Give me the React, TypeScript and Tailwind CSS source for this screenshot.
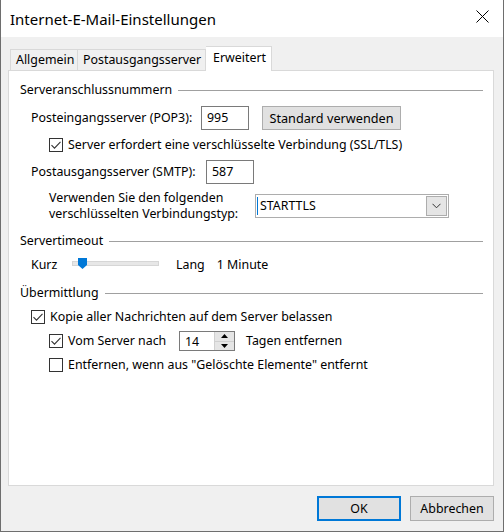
import React from "react";

function Check({ checked }: { checked: boolean }) {
  return (
    <div className="w-[14px] h-[14px] border border-[#333333] bg-white flex items-center justify-center shrink-0">
      {checked && (
        <svg width="12" height="12" viewBox="0 0 12 12">
          <path d="M1.5 6.2 L4.5 9.2 L10.5 2.8" fill="none" stroke="#333333" strokeWidth="1.1" />
        </svg>
      )}
    </div>
  );
}

function GroupHeader({ label }: { label: string }) {
  return (
    <div className="flex items-center h-[16px]">
      <span className="whitespace-nowrap">{label}</span>
      <div className="flex-1 h-px bg-[#a0a0a0] ml-[6px] mr-[2px]" />
    </div>
  );
}

export default function App() {
  return (
    <div className="w-[504px] h-[532px] bg-[#f0f0f0] border-l border-r border-b border-[#6e6e6e] flex flex-col text-[12.4px] text-black font-['Noto_Sans',sans-serif] leading-[16px]">
      {/* Title bar */}
      <div className="h-[37px] bg-white flex items-center justify-between pl-[9px] pr-[14px] shrink-0">
        <span className="text-[15px] leading-[20px] text-black mt-[1px]">Internet-E-Mail-Einstellungen</span>
        <svg width="13" height="13" viewBox="0 0 13 13" className="mt-[-4px]">
          <path d="M0.5 0.5 L12.5 12.5 M12.5 0.5 L0.5 12.5" stroke="#000" strokeWidth="1" />
        </svg>
      </div>

      {/* Tabs */}
      <div className="ml-[9px] mt-[9px] flex items-end h-[24px] relative z-10">
        <div className="h-[21px] border border-b-0 border-[#d9d9d9] bg-[#f0f0f0] px-[5px] flex items-center w-[68px]">Allgemein</div>
        <div className="h-[21px] border border-b-0 border-l-0 border-[#d9d9d9] bg-[#f0f0f0] px-[5px] flex items-center w-[128px]">Postausgangsserver</div>
        <div className="h-[25px] -mb-px border border-b-0 border-l-0 border-[#d9d9d9] bg-white px-[7px] flex items-center pb-[3px] w-[66px]">Erweitert</div>
      </div>

      {/* Panel */}
      <div className="ml-[7px] w-[486px] h-[416px] border border-[#d9d9d9] bg-white pl-[11px] pr-[8px] pt-[11px] flex flex-col shrink-0">
        <GroupHeader label="Serveranschlussnummern" />

        <div className="mt-[7px] flex items-center h-[25px] ml-[11px]">
          <span className="w-[170px]">Posteingangsserver (POP3):</span>
          <div className="w-[48px] h-[24px] border border-[#7a7a7a] flex items-center px-[5px] mt-[1px]">995</div>
          <div className="ml-[13px] w-[139px] h-[24px] bg-[#e1e1e1] border border-[#adadad] flex items-center justify-center text-[12.7px]">Standard verwenden</div>
        </div>

        <div className="mt-[7px] flex items-center h-[16px] ml-[29px]">
          <Check checked />
          <span className="ml-[5px]">Server erfordert eine verschlüsselte Verbindung (SSL/TLS)</span>
        </div>

        <div className="mt-[7px] flex items-center h-[24px] ml-[11px]">
          <span className="w-[175px]">Postausgangsserver (SMTP):</span>
          <div className="w-[48px] h-[24px] border border-[#7a7a7a] flex items-center px-[5px]">587</div>
        </div>

        <div className="mt-[6px] flex items-center h-[32px] ml-[29px]">
          <div className="w-[206px] flex flex-col">
            <span>Verwenden Sie den folgenden</span>
            <span>verschlüsselten Verbindungstyp:</span>
          </div>
          <div className="w-[194px] h-[24px] border border-[#adadad] bg-white flex items-center relative">
            <div className="w-px h-[18px] bg-[#0078d7] ml-[1px]" />
            <span className="ml-[2px] flex-1">STARTTLS</span>
            <div className="w-[21px] h-[20px] mr-[1px] bg-[#e5e5e5] border border-[#adadad] flex items-center justify-center">
              <svg width="9" height="6" viewBox="0 0 9 6">
                <path d="M0.5 0.8 L4.5 4.8 L8.5 0.8" fill="none" stroke="#333" strokeWidth="1" />
              </svg>
            </div>
          </div>
        </div>

        <div className="mt-[11px]">
          <GroupHeader label="Servertimeout" />
        </div>

        <div className="mt-[8px] flex items-center h-[16px] ml-[11px]">
          <span className="w-[41px]">Kurz</span>
          <div className="relative w-[87px] h-[5px] bg-[#e7e7e7] border border-[#d6d6d6] -mt-[3px]">
            <svg width="9" height="11" viewBox="0 0 9 11" className="absolute left-[5px] top-[-4px]">
              <path d="M0 0 H9 V7 L4.5 11 L0 7 Z" fill="#0078d7" />
            </svg>
          </div>
          <span className="ml-[17px]">Lang</span>
          <span className="ml-[12px]">1 Minute</span>
        </div>

        <div className="mt-[12px]">
          <GroupHeader label="Übermittlung" />
        </div>

        <div className="mt-[8px] flex items-center h-[16px] ml-[11px]">
          <Check checked />
          <span className="ml-[5px]">Kopie aller Nachrichten auf dem Server belassen</span>
        </div>

        <div className="mt-[6px] flex items-center h-[20px] ml-[29px]">
          <Check checked />
          <span className="ml-[5px] w-[111px]">Vom Server nach</span>
          <div className="w-[56px] h-[20px] border border-[#7a7a7a] flex items-center bg-white">
            <span className="flex-1 pl-[5px] pt-[2px]">14</span>
            <div className="w-[20px] h-[18px] flex flex-col bg-[#e5e5e5] border-l border-[#d0d0d0]">
              <div className="flex-1 flex items-center justify-center border-b border-[#d0d0d0]">
                <svg width="7" height="4" viewBox="0 0 7 4"><path d="M0 4 L3.5 0 L7 4 Z" fill="#000" /></svg>
              </div>
              <div className="flex-1 flex items-center justify-center">
                <svg width="7" height="4" viewBox="0 0 7 4"><path d="M0 0 L3.5 4 L7 0 Z" fill="#000" /></svg>
              </div>
            </div>
          </div>
          <span className="ml-[11px]">Tagen entfernen</span>
        </div>

        <div className="mt-[6px] flex items-center h-[16px] ml-[29px]">
          <Check checked={false} />
          <span className="ml-[5px]">Entfernen, wenn aus "Gelöschte Elemente" entfernt</span>
        </div>
      </div>

      {/* Buttons */}
      <div className="mt-[10px] flex justify-end pr-[9px] gap-[9px]">
        <div className="w-[84px] h-[25px] bg-[#e1e1e1] border-2 border-[#0078d7] flex items-center justify-center">OK</div>
        <div className="w-[84px] h-[25px] bg-[#e1e1e1] border border-[#adadad] flex items-center justify-center">Abbrechen</div>
      </div>
    </div>
  );
}
